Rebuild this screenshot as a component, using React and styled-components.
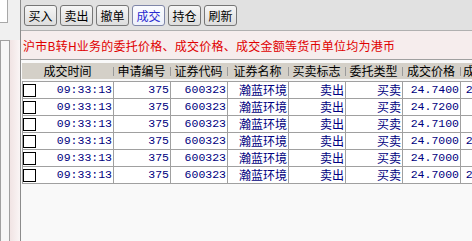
import styled, { createGlobalStyle } from "styled-components";

const GlobalStyle = createGlobalStyle`
  html, body {
    margin: 0;
    padding: 0;
    background: #f9f9f9;
  }
  body {
    font-family: "Noto Sans CJK SC", "Liberation Sans", sans-serif;
    font-size: 12px;
  }
`

const COLS = "91px 57px 57px 61px 57px 57px 58px 62px";

const Screen = styled.div`
  display: flex;
  width: 472px;
  height: 241px;
  overflow: hidden;
`

const SideStrip = styled.div`
  flex: none;
  width: 20px;
  display: flex;
  flex-direction: column;
  background: #f0f0f0;
  border-right: 1px solid #8c8c8c;
`

const SideInput = styled.div`
  width: 8px;
  height: 23px;
  box-sizing: border-box;
  background: #fff;
  border-right: 1px solid #a8a8a8;
  border-bottom: 1px solid #a8a8a8;
`

const SideLower = styled.div`
  flex: 1;
  display: flex;
  margin-top: 17px;
`

const SideBox = styled.div`
  width: 8px;
  border: 1px solid #a0a0a0;
  border-bottom: none;
  background: #f7f7f7;
`

const SidePink = styled.div`
  flex: 1;
  background: linear-gradient(to right, #f1e4e4, #faf5f5);
`

const Main = styled.div`
  flex: 1;
  min-width: 0;
  display: flex;
  flex-direction: column;
  overflow: hidden;
`

const Toolbar = styled.div`
  height: 30px;
  flex: none;
  display: flex;
  align-items: center;
  gap: 3px;
  padding-left: 3px;
  background: #e1e1e1;
  border-bottom: 1px solid #b0b0b0;
`

const ToolButton = styled.button`
  width: 33px;
  height: 21px;
  padding: 0;
  box-sizing: border-box;
  display: flex;
  align-items: center;
  justify-content: center;
  border: 1px solid ${(p) => (p.$active ? "#7f86a8" : "#767676")};
  border-radius: 3px;
  background: ${(p) =>
    p.$active
      ? "linear-gradient(#fbfcff, #eef1fb)"
      : "linear-gradient(#f6f6f6, #dddddd)"};
  color: ${(p) => (p.$active ? "#2a2ad0" : "#000")};
  font-family: "Noto Sans CJK SC", sans-serif;
  font-size: 12px;
`

const Notice = styled.div`
  height: 28px;
  flex: none;
  display: flex;
  align-items: center;
  padding-left: 2px;
  background: #f6eded;
  color: #e00000;
  letter-spacing: 0.25px;
  white-space: nowrap;
  border-bottom: 1px solid #a0a0a0;
`

const TableArea = styled.div`
  flex: 1;
  padding: 3px 0 0 1px;
  background: #f9f9f9;
  overflow: hidden;
`

const HeaderRow = styled.div`
  display: grid;
  grid-template-columns: ${COLS};
  height: 16px;
  margin-bottom: 2px;
  background: #d4d0c8;
`

const HeadCell = styled.div`
  line-height: 16px;
  text-align: ${(p) => (p.$left ? "left" : "center")};
  padding-left: ${(p) => (p.$left ? "3px" : "0")};
  white-space: nowrap;
  overflow: hidden;
  color: #000;
  background: ${(p) =>
    p.$sep ? "linear-gradient(#9a9a9a, #9a9a9a) no-repeat left center / 1px 9px" : "none"};
`

const Body = styled.div`
  border-bottom: 1px solid #a0a0a0;
`

const Row = styled.div`
  display: grid;
  grid-template-columns: ${COLS};
  height: 17px;
  box-sizing: border-box;
  border-top: 1px solid #a0a0a0;
  background: #fff;
`

const Cell = styled.div`
  display: flex;
  align-items: center;
  justify-content: ${(p) => (p.$check ? "space-between" : "flex-end")};
  padding-right: 1px;
  border-left: 1px solid #a0a0a0;
  white-space: nowrap;
  overflow: hidden;
  color: #000080;
  font-family: ${(p) =>
    p.$mono ? '"Liberation Mono", "Noto Sans CJK SC", monospace' : '"Noto Sans CJK SC", sans-serif'};
  font-size: ${(p) => (p.$mono ? "11.5px" : "12px")};
  line-height: 16px;
`

const CheckBox = styled.span`
  width: 13px;
  height: 13px;
  box-sizing: border-box;
  border: 1px solid #000;
  background: #fff;
`

const buttons = ["买入", "卖出", "撤单", "成交", "持仓", "刷新"];
const headers = ["成交时间", "申请编号", "证券代码", "证券名称", "买卖标志", "委托类型", "成交价格", "成交金额"];

const trades = [
  { price: "24.7400", amount: "24740.00" },
  { price: "24.7200", amount: "494.40" },
  { price: "24.7100", amount: "741.30" },
  { price: "24.7000", amount: "24700.00" },
  { price: "24.7000", amount: "494.00" },
  { price: "24.7000", amount: "24700.00" },
];

const App = () => {
  return (
    <Screen>
      <GlobalStyle />
      <SideStrip>
        <SideInput />
        <SideLower>
          <SideBox />
          <SidePink />
        </SideLower>
      </SideStrip>
      <Main>
        <Toolbar>
          {buttons.map((b) => (
            <ToolButton key={b} $active={b === "成交"}>{b}</ToolButton>
          ))}
        </Toolbar>
        <Notice>沪市B转H业务的委托价格、成交价格、成交金额等货币单位均为港币</Notice>
        <TableArea>
          <HeaderRow>
            {headers.map((h, i) => (
              <HeadCell key={h} $sep={i > 0} $left={i === headers.length - 1}>{h}</HeadCell>
            ))}
          </HeaderRow>
          <Body>
            {trades.map((t, i) => (
              <Row key={i}>
                <Cell $check $mono>
                  <CheckBox />
                  09:33:13
                </Cell>
                <Cell $mono>375</Cell>
                <Cell $mono>600323</Cell>
                <Cell>瀚蓝环境</Cell>
                <Cell>卖出</Cell>
                <Cell>买卖</Cell>
                <Cell $mono>{t.price}</Cell>
                <Cell $mono>{t.amount}</Cell>
              </Row>
            ))}
          </Body>
        </TableArea>
      </Main>
    </Screen>
  );
};

export default App;
